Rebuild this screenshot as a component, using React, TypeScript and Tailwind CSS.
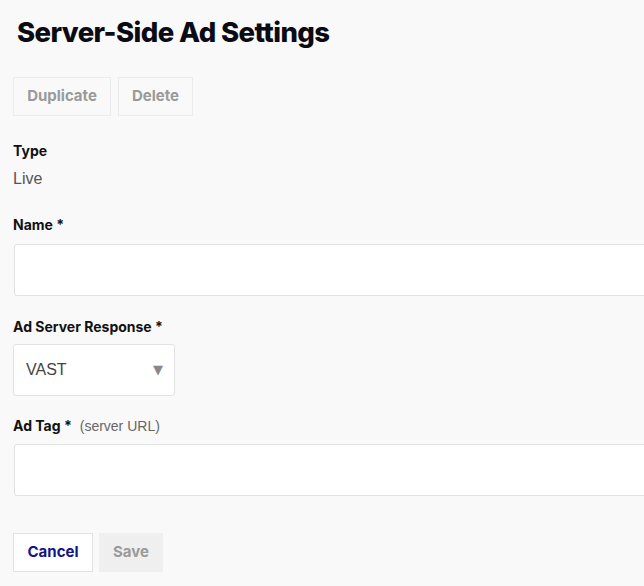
export default function App() {
  return (
    <div className="w-[644px] h-[586px] overflow-hidden bg-[#f9f9f9] font-['Inter',sans-serif] text-[#111]">
      <div className="pl-[13px] pt-[14px]">
        <h1 className="ml-[4px] text-[27.5px] leading-[36px] font-extrabold tracking-[-0.6px] text-[#0b0b14]">
          Server-Side Ad Settings
        </h1>
        <div className="mt-[27px] flex gap-[7px]">
          <button className="h-[39px] w-[98px] border border-[#ececec] text-[15px] font-bold text-[#9a9a9a]">
            Duplicate
          </button>
          <button className="h-[39px] w-[75px] border border-[#ececec] text-[15px] font-bold text-[#9a9a9a]">
            Delete
          </button>
        </div>
        <div className="mt-[26px] text-[14px] leading-[18px] font-bold">Type</div>
        <div className="mt-[9px] text-[16px] leading-[20px] text-[#555] font-['Liberation_Sans',sans-serif]">Live</div>
        <div className="mt-[27px] text-[14px] leading-[18px] font-bold">Name *</div>
        <div className="mt-[10px] ml-[1px] h-[52px] w-[700px] rounded-[3px] border border-[#e2e2e2] bg-white"></div>
        <div className="mt-[22px] text-[14px] leading-[18px] font-bold">Ad Server Response *</div>
        <div className="mt-[8px] h-[52px] w-[162px] rounded-[3px] border border-[#e2e2e2] bg-white flex items-center justify-between pl-[12px] pr-[11px]">
          <span className="text-[16px] text-[#444] font-['Liberation_Sans',sans-serif]">VAST</span>
          <span className="text-[13px] text-[#888] font-['DejaVu_Sans',sans-serif]">▼</span>
        </div>
        <div className="mt-[21px] text-[14px] leading-[18px] flex items-baseline">
          <span className="font-bold">Ad Tag *</span>
          <span className="ml-[8px] text-[#666] font-['Liberation_Sans',sans-serif]">(server URL)</span>
        </div>
        <div className="mt-[9px] ml-[1px] h-[52px] w-[700px] rounded-[3px] border border-[#e2e2e2] bg-white"></div>
        <div className="mt-[37px] flex gap-[6px]">
          <button className="h-[39px] w-[80px] border border-[#e2e2e2] bg-white text-[15px] font-bold text-[#13138a]">
            Cancel
          </button>
          <button className="h-[39px] w-[64px] bg-[#efefef] text-[15px] font-bold text-[#9a9a9a]">
            Save
          </button>
        </div>
      </div>
    </div>
  );
}
